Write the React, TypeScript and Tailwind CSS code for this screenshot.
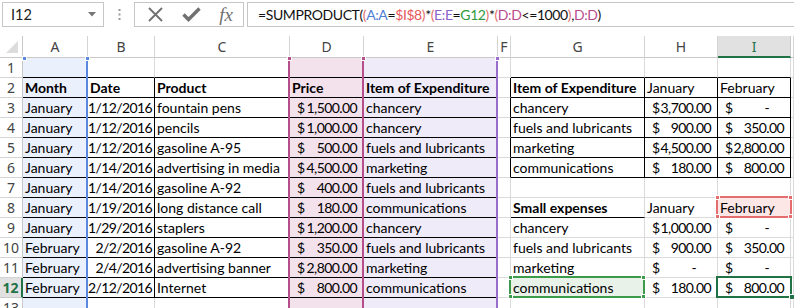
import React from "react";

type Acct = { kind: "acct"; v: string };
type Txt = { kind: "text"; v: string; bold?: boolean; right?: boolean };
type Cell = Acct | Txt;

const COLS = ["A", "B", "C", "D", "E", "F", "G", "H", "I", ""];

const t = (v: string, bold = false): Txt => ({ kind: "text", v, bold });
const r = (v: string): Txt => ({ kind: "text", v, right: true });
const m = (v: string): Acct => ({ kind: "acct", v });

const purchases: [string, string, string, string, string][] = [
  ["January", "1/12/2016", "fountain pens", "1,500.00", "chancery"],
  ["January", "1/12/2016", "pencils", "1,000.00", "chancery"],
  ["January", "1/12/2016", "gasoline A-95", "500.00", "fuels and lubricants"],
  ["January", "1/14/2016", "advertising in media", "4,500.00", "marketing"],
  ["January", "1/14/2016", "gasoline A-92", "400.00", "fuels and lubricants"],
  ["January", "1/19/2016", "long distance call", "180.00", "communications"],
  ["January", "1/29/2016", "staplers", "1,200.00", "chancery"],
  ["February", "2/2/2016", "gasoline A-92", "350.00", "fuels and lubricants"],
  ["February", "2/4/2016", "advertising banner", "2,800.00", "marketing"],
  ["February", "2/12/2016", "Internet", "800.00", "communications"],
];

const totals: [string, string, string][] = [
  ["chancery", "3,700.00", "-"],
  ["fuels and lubricants", "900.00", "350.00"],
  ["marketing", "4,500.00", "2,800.00"],
  ["communications", "180.00", "800.00"],
];

const small: [string, string, string][] = [
  ["chancery", "1,000.00", "-"],
  ["fuels and lubricants", "900.00", "350.00"],
  ["marketing", "-", "-"],
  ["communications", "180.00", "800.00"],
];

const cells: Record<string, Cell> = {
  A2: t("Month", true),
  B2: t("Date", true),
  C2: t("Product", true),
  D2: t("Price", true),
  E2: t("Item of Expenditure", true),
  G2: t("Item of Expenditure", true),
  H2: t("January"),
  I2: t("February"),
  G8: t("Small expenses", true),
  H8: t("January"),
  I8: t("February"),
};
purchases.forEach((p, i) => {
  const row = i + 3;
  cells["A" + row] = t(p[0]);
  cells["B" + row] = r(p[1]);
  cells["C" + row] = t(p[2]);
  cells["D" + row] = m(p[3]);
  cells["E" + row] = t(p[4]);
});
totals.forEach((p, i) => {
  cells["G" + (i + 3)] = t(p[0]);
  cells["H" + (i + 3)] = m(p[1]);
  cells["I" + (i + 3)] = m(p[2]);
});
small.forEach((p, i) => {
  cells["G" + (i + 9)] = t(p[0]);
  cells["H" + (i + 9)] = m(p[1]);
  cells["I" + (i + 9)] = m(p[2]);
});

function rightBlack(row: number, c: number) {
  return (row >= 2 && row <= 12 && c <= 4) || (row >= 2 && row <= 6 && c >= 5 && c <= 8);
}
function bottomBlack(row: number, c: number) {
  return (row >= 1 && row <= 12 && c <= 4) || (row >= 1 && row <= 6 && c >= 6 && c <= 8) || (row === 8 && c === 6);
}
function fill(row: number, c: number) {
  if (c === 0) return "bg-[#ebf1fc]";
  if (c === 3) return "bg-[#f3e1eb]";
  if (c === 4) return "bg-[#efebf8]";
  if (row === 8 && c === 8) return "bg-[#fde6e6]";
  if (row === 12 && c === 6) return "bg-[#e8f2e8]";
  return "bg-white";
}

function CellContent({ cell }: { cell?: Cell }) {
  if (!cell) return null;
  if (cell.kind === "acct") {
    return (
      <div className="flex w-full justify-between pl-[7px] pr-[6px] tracking-[-0.6px]">
        <span>$</span>
        <span className={cell.v === "-" ? "pr-[15px]" : ""}>{cell.v}</span>
      </div>
    );
  }
  return (
    <div
      className={`w-full whitespace-nowrap ${cell.right ? "pr-[2px] text-right tracking-[-0.6px]" : "pl-[2px]"} ${
        cell.bold ? "font-bold" : ""
      }`}
    >
      {cell.v}
    </div>
  );
}

function Handle({ x, y, color }: { x: number; y: number; color: string }) {
  return <div className={`absolute h-[5px] w-[5px] border border-white ${color}`} style={{ left: x - 2, top: y - 2 }} />;
}

function FormulaBar() {
  const red = "text-[#e2706c]";
  return (
    <div className="flex h-[36px] items-start pl-[2px] pt-[2px] font-['Lato'] text-[14.5px]">
      <div className="flex h-[25px] w-[102px] items-center justify-between border border-[#c6c6c6] pl-[8px] pr-[7px] text-[#222]">
        <span>I12</span>
        <svg width="8" height="5" viewBox="0 0 8 5">
          <path d="M0 0h8L4 4.5z" fill="#767676" />
        </svg>
      </div>
      <div className="flex h-[25px] w-[30px] items-center justify-center">
        <svg width="3" height="11" viewBox="0 0 3 11">
          <rect x="0.5" y="0" width="2" height="2" fill="#9a9a9a" />
          <rect x="0.5" y="4.5" width="2" height="2" fill="#9a9a9a" />
          <rect x="0.5" y="9" width="2" height="2" fill="#9a9a9a" />
        </svg>
      </div>
      <div className="flex h-[25px] w-[110px] items-center border border-[#c6c6c6]">
        <div className="flex w-[38px] justify-center pl-[2px]">
          <svg width="15" height="15" viewBox="0 0 15 15">
            <path d="M1 1l13 13M14 1L1 14" stroke="#707070" strokeWidth="1.8" />
          </svg>
        </div>
        <div className="flex w-[36px] justify-center">
          <svg width="19" height="15" viewBox="0 0 19 15">
            <path d="M1.5 7.5l5 5L17.5 1.5" stroke="#707070" strokeWidth="3.4" fill="none" />
          </svg>
        </div>
        <div className="flex w-[34px] justify-center font-['Liberation_Serif'] text-[19px] italic leading-none text-[#707070]">
          fx
        </div>
      </div>
      <div className="ml-[3px] flex h-[25px] flex-1 items-center border border-r-0 border-[#c6c6c6] pl-[10px] text-[14px] tracking-[-0.4px] text-[#111]">
        <span>=SUMPRODUCT(</span>
        <span className={red}>(</span>
        <span className="text-[#4f80d6]">A:A</span>
        <span>=</span>
        <span className="text-[#e8575a]">$I$8</span>
        <span className={red}>)</span>
        <span>*</span>
        <span className={red}>(</span>
        <span className="text-[#8b61cc]">E:E</span>
        <span>=</span>
        <span className="text-[#2f9a3c]">G12</span>
        <span className={red}>)</span>
        <span>*</span>
        <span className={red}>(</span>
        <span className="text-[#b84b8d]">D:D</span>
        <span>&lt;=1000</span>
        <span className={red}>)</span>
        <span>,</span>
        <span className="text-[#b84b8d]">D:D</span>
        <span>)</span>
      </div>
    </div>
  );
}

export default function App() {
  const rows = Array.from({ length: 13 }, (_, i) => i + 1);
  return (
    <div className="h-[308px] w-[794px] overflow-hidden bg-white">
      <FormulaBar />
      <div className="relative grid grid-cols-[23px_65px_67px_135px_74px_134px_13px_134px_73px_73px_3px] grid-rows-[22px_repeat(13,20px)]">
        {/* column headers */}
        <div className="relative border-b border-r border-[#c9c9c9] bg-white">
          <svg className="absolute bottom-[4px] right-[4px]" width="12" height="12" viewBox="0 0 12 12">
            <path d="M12 0V12H0z" fill="#dcdcdc" />
          </svg>
        </div>
        {COLS.map((c, i) =>
          c === "I" ? (
            <div
              key={i}
              className="flex items-center justify-center border-b-2 border-r border-b-[#217346] border-r-[#c9c9c9] bg-[#e1e1e1] font-['Noto_Sans'] text-[14px] text-[#217346]"
            >
              {c}
            </div>
          ) : (
            <div
              key={i}
              className="flex items-center justify-center border-b border-r border-[#d4d4d4] border-b-[#c9c9c9] bg-white font-['Noto_Sans'] text-[14px] text-[#444]"
            >
              {c}
            </div>
          )
        )}

        {rows.map((row) => (
          <React.Fragment key={row}>
            {row === 12 ? (
              <div className="flex items-center justify-center border-b border-r-2 border-b-[#c9c9c9] border-r-[#217346] bg-[#e1e1e1] font-['Noto_Sans'] text-[14px] font-bold text-[#217346]">
                {row}
              </div>
            ) : (
              <div className="flex items-center justify-center border-b border-r border-b-[#d4d4d4] border-r-[#c9c9c9] bg-white font-['Noto_Sans'] text-[14px] text-[#444]">
                {row}
              </div>
            )}
            {COLS.map((c, ci) => (
              <div
                key={ci}
                className={`flex items-center overflow-visible border-b border-r font-['Lato'] text-[14px] leading-[19px] text-black ${
                  rightBlack(row, ci) ? "border-r-black" : "border-r-[#dadada]"
                } ${bottomBlack(row, ci) ? "border-b-black" : "border-b-[#dadada]"} ${fill(row, ci)}`}
              >
                <CellContent cell={cells[c + row]} />
              </div>
            ))}
          </React.Fragment>
        ))}

        {/* range highlights for the formula references */}
        <div className="absolute bottom-0 left-[86px] top-[21px] w-[2px] bg-[#5b87dc]" />
        <Handle x={24} y={22} color="bg-[#5b87dc]" />
        <Handle x={87} y={22} color="bg-[#5b87dc]" />
        <div className="absolute bottom-0 left-[496px] top-[21px] w-[2px] bg-[#9a6ccc]" />
        <Handle x={497} y={22} color="bg-[#9a6ccc]" />
        <div className="absolute bottom-0 left-[288px] top-[21px] w-[2px] bg-[#b44f8b]" />
        <div className="absolute bottom-0 left-[362px] top-[21px] w-[2px] bg-[#b44f8b]" />
        <Handle x={289} y={22} color="bg-[#b44f8b]" />
        <Handle x={363} y={22} color="bg-[#b44f8b]" />

        <div className="absolute left-[716px] top-[160px] h-[22px] w-[76px] border-2 border-[#e46d6d]" />
        <Handle x={717} y={161} color="bg-[#e46d6d]" />
        <Handle x={790} y={161} color="bg-[#e46d6d]" />
        <Handle x={717} y={180} color="bg-[#e46d6d]" />
        <Handle x={790} y={180} color="bg-[#e46d6d]" />

        <div className="absolute left-[509px] top-[240px] h-[22px] w-[136px] border-2 border-[#3c9b48]" />
        <Handle x={510} y={241} color="bg-[#3c9b48]" />
        <Handle x={643} y={241} color="bg-[#3c9b48]" />
        <Handle x={510} y={260} color="bg-[#3c9b48]" />
        <Handle x={643} y={260} color="bg-[#3c9b48]" />

        <div className="absolute left-[716px] top-[240px] h-[22px] w-[76px] border-2 border-[#217346]" />
        <div className="absolute left-[789px] top-[258px] h-[6px] w-[6px] border border-white bg-[#217346]" />
      </div>
    </div>
  );
}
